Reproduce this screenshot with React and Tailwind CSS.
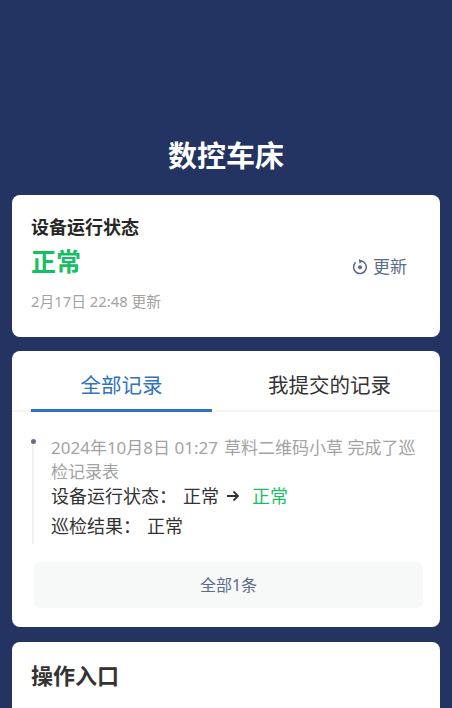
const FONT = "font-['Noto_Sans','Noto_Sans_CJK_SC',sans-serif]"

function RefreshIcon() {
  return (
    <svg width="16" height="16" viewBox="0 0 16 16" fill="none" className="mr-[5px]">
      <path d="M9.400 1.900A6.400 6.400 0 1 1 3.200 3.800" stroke="#5b6b8c" strokeWidth="1.500" strokeLinecap="round" />
      <path d="M6.800 0 10.600 1.900 7.600 4.800" fill="#5b6b8c" />
      <circle cx="8" cy="8.200" r="2" fill="#5b6b8c" />
    </svg>
  )
}

function StatusCard() {
  return (
    <div className="mx-3 h-[142px] rounded-lg bg-white px-[19px] pt-[20px] relative">
      <div className="text-[18px] leading-[25px] font-bold text-[#262626]">设备运行状态</div>
      <div className="mt-[3px] text-[25px] leading-[36px] font-bold text-[#16bf63]">正常</div>
      <div className="mt-[12px] text-[14.800px] leading-[20px] text-[#a3a3a3]">2月17日 22:48 更新</div>
      <div className="absolute right-[33px] top-[60px] flex items-center text-[17px] leading-[24px] text-[#5b6b8c]">
        <RefreshIcon />
        更新
      </div>
    </div>
  )
}

function RecordsCard() {
  return (
    <div className="mx-3 mt-[14px] h-[276px] rounded-lg bg-white">
      <div className="flex h-[61px] border-b-2 border-[#f5f5f5] px-[19px]">
        <div className="h-[61px] w-[181px] border-b-[3px] border-[#2f74bd] pt-[19px] text-center text-[20.500px] leading-[30px] text-[#2f74bd]">全部记录</div>
        <div className="flex-1 pt-[19px] pl-[26px] text-center text-[20.500px] leading-[30px] text-[#333333]">我提交的记录</div>
      </div>
      <div className="relative ml-[39px] mr-[20px] pt-[24px]">
        <div className="absolute left-[-20px] top-[27px] size-[5px] rounded-full bg-[#666f80]" />
        <div className="absolute left-[-19px] top-[32px] h-[100px] w-[2px] bg-[#f2f2f2]" />
        <div className="text-[17px] leading-[24px] text-[#a3a3a3]">2024年10月8日 01:27&nbsp;&#8202;草料二维码小草 完成了巡检记录表</div>
        <div className="flex items-center text-[18px] leading-[24px] text-[#333333]">
          <span className="w-[132px]">设备运行状态：</span>
          <span>正常</span>
          <svg width="14" height="12" viewBox="0 0 14 12" fill="none" className="mx-[7px]">
            <path d="M1 6h11M7.500 1.500 12 6l-4.500 4.500" stroke="#333333" strokeWidth="1.800" />
          </svg>
          <span className="ml-[5px] text-[#16bf63]">正常</span>
        </div>
        <div className="mt-[6px] flex text-[18px] leading-[24px] text-[#333333]">
          <span className="w-[96px]">巡检结果：</span>
          <span>正常</span>
        </div>
      </div>
      <div className="ml-[22px] mr-[17px] mt-[24px] flex h-[46px] items-center justify-center rounded-md bg-[#f7f8f8] text-[16px] text-[#5b6b8c]">全部1条</div>
    </div>
  )
}

export default function App() {
  return (
    <div className={`${FONT} h-[708px] overflow-hidden bg-[#233463]`}>
      <div className="pt-[135px] text-center text-[29px] leading-[42px] font-bold text-white">数控车床</div>
      <div className="mt-[18px]">
        <StatusCard />
        <RecordsCard />
        <div className="mx-3 mt-[15px] h-[100px] rounded-lg bg-white px-[19px] pt-[17px] text-[22px] leading-[33px] font-bold text-[#333333]">操作入口</div>
      </div>
    </div>
  )
}
